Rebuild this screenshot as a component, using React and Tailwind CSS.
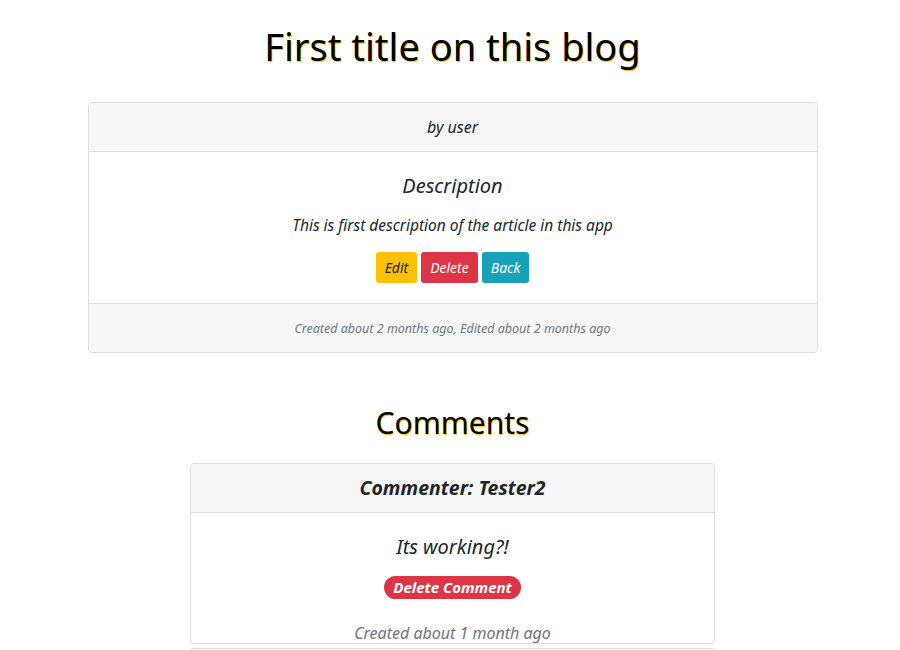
export default function App() {
  return (
    <div className="min-h-[650px] bg-white pl-[5px] italic text-[#212529]" style={{ fontFamily: '"Noto Sans", sans-serif' }}>
      <h1 className="pt-[22px] text-center text-[38px] not-italic leading-[48px] text-black [text-shadow:1px_1px_#f5c518]">
        First title on this blog
      </h1>

      <div className="mx-auto mt-[32px] w-[730px] overflow-hidden rounded border border-[#dcdcdc] text-center">
        <div className="flex h-[49px] items-center justify-center border-b border-[#dcdcdc] bg-[#f7f7f7] text-[16px]">
          by user
        </div>
        <div className="flex flex-col items-center border-b border-[#dcdcdc] pb-[20px] pt-[20px]">
          <div className="text-[20px] leading-[28px]">Description</div>
          <p className="mt-[13px] text-[15.5px] leading-[24px]">This is first description of the article in this app</p>
          <div className="mt-[15px] flex gap-[4px] text-[14px]">
            <button className="h-[31px] rounded-[3px] bg-[#ffc107] px-[9px] italic text-[#212529]">Edit</button>
            <button className="h-[31px] rounded-[3px] bg-[#dc3545] px-[9px] italic text-white">Delete</button>
            <button className="h-[31px] rounded-[3px] bg-[#17a2b8] px-[9px] italic text-white">Back</button>
          </div>
        </div>
        <div className="flex h-[48px] items-center justify-center pt-[2px] bg-[#f7f7f7] text-[12.5px] text-[#6c757d]">
          Created about 2 months ago, Edited about 2 months ago
        </div>
      </div>

      <h2 className="mt-[50px] text-center text-[30px] not-italic leading-[40px] text-black [text-shadow:1px_1px_#f5c518]">
        Comments
      </h2>

      <div className="mx-auto mt-[20px] w-[525px] overflow-hidden rounded border border-[#dcdcdc] text-center">
        <div className="flex h-[49px] items-center justify-center border-b border-[#dcdcdc] bg-[#f7f7f7] text-[19.5px] font-bold">
          Commenter: Tester2
        </div>
        <div className="flex flex-col items-center pb-[0px] pt-[20px]">
          <div className="text-[20px] leading-[28px]">Its working?!</div>
          <span className="mt-[15px] rounded-full bg-[#dc3545] px-[9px] py-[2px] text-[15px] font-bold leading-[19px] text-white">
            Delete Comment
          </span>
          <div className="mt-[24px] text-[16px] leading-[20px] text-[#6c757d]">Created about 1 month ago</div>
        </div>
      </div>
      <div className="mx-auto mt-[4px] h-[8px] w-[525px] rounded-t border border-b-0 border-[#dcdcdc]" />
    </div>
  );
}
